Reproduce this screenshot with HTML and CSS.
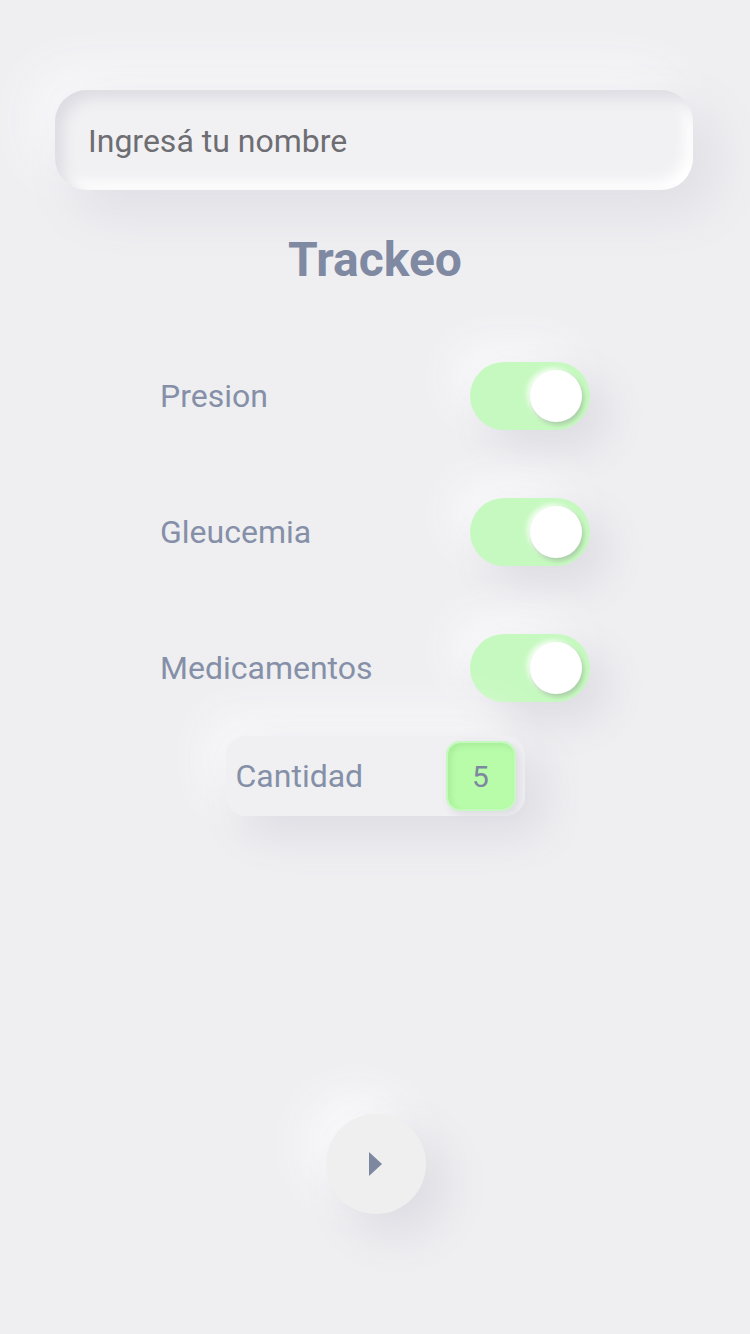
FILE: index.html
```html
<!DOCTYPE html>
<html lang="es">
<head>
<meta charset="utf-8">
<link rel="stylesheet" href="styles.css">
</head>
<body>
<main class="page">
  <div class="name-field"><span class="placeholder">Ingresá tu nombre</span></div>
  <h1 class="title">Trackeo</h1>
  <section class="list">
    <div class="row"><span class="label">Presion</span><span class="toggle"><span class="knob"></span></span></div>
    <div class="row"><span class="label">Gleucemia</span><span class="toggle"><span class="knob"></span></span></div>
    <div class="row"><span class="label">Medicamentos</span><span class="toggle"><span class="knob"></span></span></div>
  </section>
  <div class="qty"><span class="qty-label">Cantidad</span><span class="qty-value">5</span></div>
  <div class="spacer"></div>
  <button class="play" aria-label="siguiente">
    <svg width="13" height="24" viewBox="0 0 13 24"><path d="M0 0 L13 12 L0 24 Z" fill="#7d87a0"/></svg>
  </button>
</main>
</body>
</html>
```
FILE: styles.css
```css
* { box-sizing: border-box; }
html, body { margin: 0; padding: 0; }
body {
  background: #efeff2;
  font-family: Roboto, "Liberation Sans", sans-serif;
  width: 750px;
  height: 1334px;
  overflow: hidden;
}
.page {
  display: flex;
  flex-direction: column;
  align-items: center;
  padding-top: 90px;
}
.name-field {
  width: 638px;
  height: 100px;
  margin-left: -2px;
  border-radius: 32px;
  background: #f1f1f4;
  display: flex;
  align-items: center;
  padding-left: 33px;
  box-shadow: inset 8px 8px 14px #dcdce2, inset -8px -8px 14px #ffffff, 20px 20px 50px #dedee4, -20px -20px 50px #f9f9fb;
}
.placeholder {
  font-size: 32px;
  color: #6d6d72;
  margin-top: 2px;
}
.title {
  margin: 40px 0 0 0;
  font-size: 48px;
  font-weight: 700;
  color: #7f89a2;
  line-height: 60px;
}
.list {
  width: 430px;
  margin-top: 72px;
  display: flex;
  flex-direction: column;
  gap: 68px;
}
.row {
  display: flex;
  justify-content: space-between;
  align-items: center;
  height: 68px;
}
.label {
  font-size: 32px;
  color: #8590a8;
}
.toggle {
  width: 120px;
  height: 68px;
  border-radius: 34px;
  background: #c6f9bf;
  display: flex;
  align-items: center;
  justify-content: flex-end;
  padding-right: 8px;
  box-shadow: 18px 18px 40px #dcdce2, -18px -18px 40px #f9f9fb;
}
.knob {
  width: 52px;
  height: 52px;
  border-radius: 50%;
  background: #ffffff;
  box-shadow: 2px 3px 4px rgba(120,130,120,0.35), -3px -2px 5px rgba(255,255,255,0.8);
}
.qty {
  margin-top: 34px;
  width: 299px;
  height: 80px;
  border-radius: 20px;
  background: #f0f0f3;
  display: flex;
  align-items: center;
  justify-content: space-between;
  padding: 0 9px 0 10px;
  box-shadow: 18px 18px 44px #dcdce2, -18px -18px 44px #f9f9fb;
}
.qty-label {
  font-size: 32px;
  color: #8590a8;
}
.qty-value {
  width: 70px;
  height: 70px;
  border-radius: 14px;
  background: #b8fcaa;
  border: 2px solid #c6f9bf;
  display: flex;
  align-items: center;
  justify-content: center;
  font-size: 30px;
  color: #7d87a0;
  box-shadow: inset 3px 3px 6px #a8ec9a, 4px 4px 8px #dcdce2;
}
.spacer { height: 298px; }
.play {
  width: 100px;
  height: 100px;
  border-radius: 50%;
  border: none;
  background: #efefef;
  display: flex;
  align-items: center;
  justify-content: center;
  padding: 0 2px 0 0;
  margin-left: 2px;
  box-shadow: 20px 20px 46px #dcdce2, -20px -20px 46px #fafafb;
}
```
